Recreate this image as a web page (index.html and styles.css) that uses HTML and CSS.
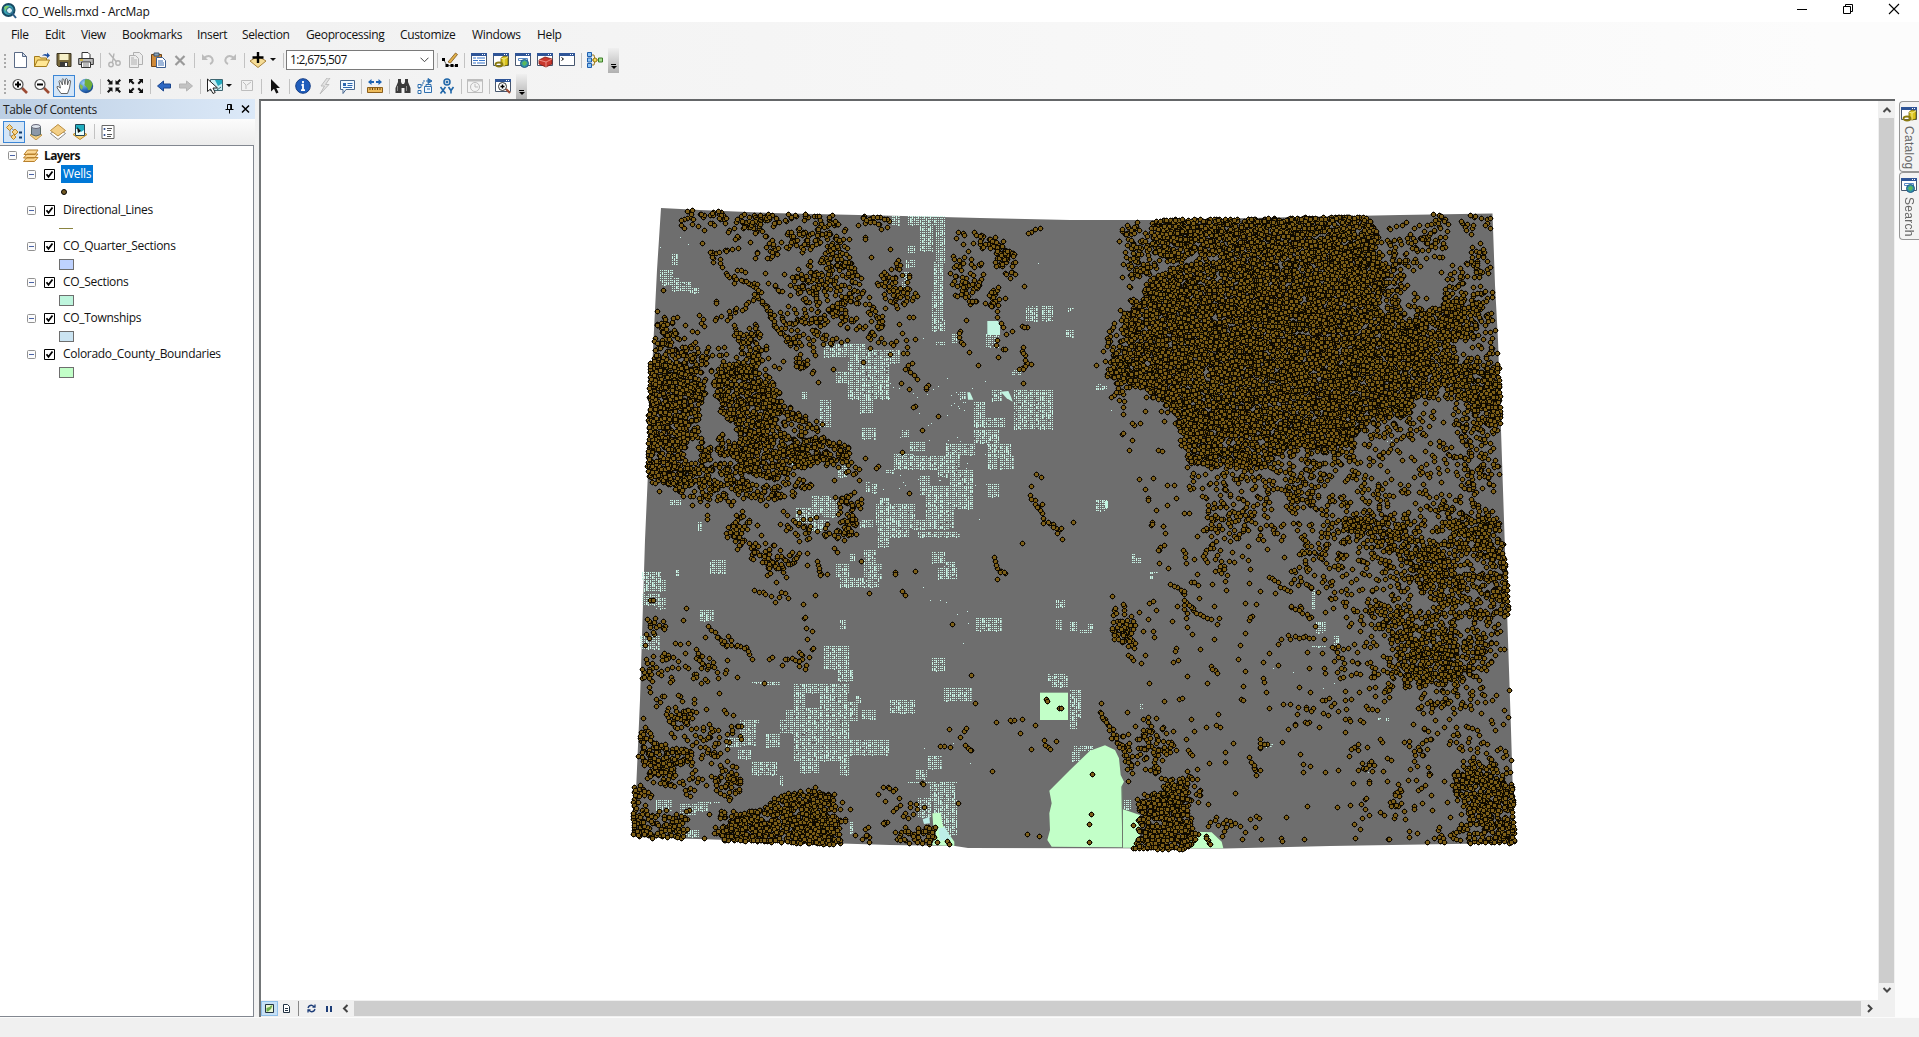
FILE: index.html
```html
<!DOCTYPE html>
<html lang="en">
<head>
<meta charset="utf-8">
<title>CO_Wells.mxd - ArcMap</title>
<link rel="stylesheet" href="styles.css">
</head>
<body>
<svg class="defs" width="0" height="0">
  <defs>
    <radialGradient id="globe" cx=".35" cy=".3" r=".8"><stop offset="0" stop-color="#9fd0f5"/><stop offset=".6" stop-color="#2c6fc0"/><stop offset="1" stop-color="#123a78"/></radialGradient>
    <symbol id="win" viewBox="0 0 16 16"><path d="M.5 1.500h15v12H.5z" fill="#fff" stroke="#46566e"/><path d="M0 1h16v3H0z" fill="#2f5597"/><path d="M11 2h1v1h-1zM13 2h1v1h-1z" fill="#fff"/></symbol>
    <symbol id="catalog" viewBox="0 0 16 16"><use href="#win"/><path d="M8 6l3-2 4 1v8l-4 1-3-1z" fill="#d8c21c" stroke="#6b5c00" stroke-width=".8"/><path d="M11 7v7M8 6l3 1 4-2" stroke="#fff3a0" fill="none" stroke-width=".8"/><ellipse cx="6" cy="12.500" rx="3.500" ry="2" fill="none" stroke="#8b7b10" stroke-width="1.800"/></symbol>
    <symbol id="search" viewBox="0 0 16 16"><use href="#win"/><path d="M3.500 6.500h9v2h-9z" fill="#fff" stroke="#5a8ac6"/><circle cx="9.500" cy="11.500" r="4" fill="#2f93a8" stroke="#235a86"/><path d="M7 11q3-4 5 0q-2 4-4 2z" fill="#5cb85c"/></symbol>
    <symbol id="check" viewBox="0 0 11 11"><path d="M.5.5h10v10H.5z" fill="#fff" stroke="#000"/><path d="M2.500 5.200l2 2.500 4-5.200" fill="none" stroke="#000" stroke-width="1.800"/></symbol>
    <symbol id="minus" viewBox="0 0 9 9"><rect x=".5" y=".5" width="8" height="8" rx="1" fill="#fbfbfb" stroke="#919191"/><path d="M2 4.500h5" stroke="#4a63a7"/></symbol>
  </defs>
</svg>

<header class="titlebar">
  <svg class="app-icon" viewBox="0 0 16 16"><circle cx="7.500" cy="7" r="6" fill="#38a3b5" stroke="#174a63" stroke-width="2"/><path d="M3 4q4-3 6 1q-3 1-2 4q-3 0-4-5z" fill="#7fcf6e"/><circle cx="8.500" cy="7.500" r="3" fill="#d4f0f5" stroke="#1b5c80"/><path d="M11 10l4 5" stroke="#2a5c86" stroke-width="2"/></svg>
  <h1>CO_Wells.mxd - ArcMap</h1>
  <div class="window-buttons">
    <svg viewBox="0 0 12 12"><path d="M1 6.500h10" stroke="#000"/></svg>
    <svg viewBox="0 0 12 12"><path d="M1.500 3.500h7v7h-7zM3.500 3V1.500h7v7H9" fill="none" stroke="#000"/></svg>
    <svg viewBox="0 0 12 12"><path d="M1 1l10 10M11 1L1 11" stroke="#000" stroke-width="1.100"/></svg>
  </div>
</header>

<nav class="menubar">
  <span>File</span><span>Edit</span><span>View</span><span>Bookmarks</span><span>Insert</span><span>Selection</span><span>Geoprocessing</span><span>Customize</span><span>Windows</span><span>Help</span>
</nav>

<div class="toolbar standard">
  <i class="grip"></i>
  <b><svg viewBox="0 0 16 16"><path d="M2.500.500h8l4 4v11h-12z" fill="#fff" stroke="#5b6b86"/><path d="M10.500.5v4h4z" fill="#cdd9ea" stroke="#5b6b86"/></svg></b>
  <b><svg viewBox="0 0 16 16"><path d="M.5 14.500v-10h5l1 1.500h6v2" fill="#f7d774" stroke="#a37b1c"/><path d="M.5 14.500l3-6.500h12l-3 6.500z" fill="#ffe794" stroke="#a37b1c"/><path d="M8 4q2-3 5-1.500V.5l3 3-3 2.800V4.500Q10 3 8 4z" fill="#1d4fa0"/></svg></b>
  <b><svg viewBox="0 0 16 16"><path d="M1 1.500h14v13H2.500L1 13z" fill="#77683a" stroke="#3a3320"/><path d="M3.500 2h9v6h-9z" fill="#f6f0c8"/><path d="M4 10h8v5H4z" fill="#3a3a3a"/><path d="M9 11h2v3H9z" fill="#fff"/></svg></b>
  <b><svg viewBox="0 0 16 16"><path d="M4 6V.500h6l2 2V6" fill="#fff" stroke="#333"/><path d="M.7 6.500h14.600v6H.7z" fill="#b9b9b9" stroke="#333"/><path d="M3.500 10h9v5.500h-9z" fill="#fff" stroke="#333"/><path d="M5 12h6M5 14h6" stroke="#777"/><path d="M2 8h3" stroke="#d5b52c" stroke-width="1.500"/></svg></b>
  <i class="sep"></i>
  <b><svg viewBox="0 0 16 16" fill="none" stroke="#b4b4b4" stroke-width="1.400"><path d="M3 1l7.500 9M8 1.500L6.500 10"/><circle cx="5" cy="12.500" r="2.200"/><circle cx="12" cy="11" r="2.200"/></svg></b>
  <b><svg viewBox="0 0 16 16" fill="#ededed" stroke="#b0b0b0"><path d="M5.500.500h6l3 3v9h-9z"/><path d="M1.500 3.500h6l3 3v9h-9z"/><path d="M3 8h6M3 10h6M3 12h6M3 6h3"/></svg></b>
  <b><svg viewBox="0 0 16 16"><path d="M1.500 2.500h10v12h-10z" fill="#cf8a3a" stroke="#6f4417"/><path d="M4 1h5v3H4z" fill="#8ba5bd" stroke="#3f5266"/><path d="M6.500 5.500h6l3 3v7h-9z" fill="#fff" stroke="#3d5e90"/><path d="M8 9h5M8 11h6M8 13h6" stroke="#3d6fb4"/></svg></b>
  <b><svg viewBox="0 0 16 16"><path d="M3.500 4l9 9M12.500 4l-9 9" stroke="#9a9a9a" stroke-width="2.200"/></svg></b>
  <i class="sep"></i>
  <b><svg viewBox="0 0 16 16" fill="none" stroke="#bcbcbc" stroke-width="2"><path d="M4 6q5-4 8 0q2 4-2 6"/><path d="M2 2v6h6z" fill="#bcbcbc" stroke="none"/></svg></b>
  <b><svg viewBox="0 0 16 16" fill="none" stroke="#bcbcbc" stroke-width="2"><path d="M12 6q-5-4-8 0q-2 4 2 6"/><path d="M14 2v6H8z" fill="#bcbcbc" stroke="none"/></svg></b>
  <i class="sep"></i>
  <b><svg viewBox="0 0 16 16"><path d="M0 9l8-5 8 5-8 6.500z" fill="#f5dc96" stroke="#a8823a"/><path d="M8 0v11M2.500 5.500h11" stroke="#000" stroke-width="2.400"/></svg></b>
  <i class="caret"></i>
  <i class="sep"></i>
  <div class="scale"><span>1:2,675,507</span><svg viewBox="0 0 9 6"><path d="M.5.7l4 4 4-4" fill="none" stroke="#444"/></svg></div>
  <i class="sep thin"></i>
  <b><svg viewBox="0 0 16 16"><path d="M6 10L13.500 1l2 1.500L8.500 11z" fill="#e0b04a" stroke="#7c541b" stroke-width=".8"/><path d="M1.500 7.500l3.500 6 9.500.5" fill="none" stroke="#333" stroke-width=".8"/><path d="M0 6h3v3H0zM3.500 12h3v3h-3zM8.500 12h3v3h-3zM13 12h3v3h-3z" fill="#000"/></svg></b>
  <i class="sep wide"></i>
  <b><svg viewBox="0 0 16 16"><use href="#win"/><path d="M2 6h3M6 6h8M2 8.500h5M8 8.500h6M2 11h3M6 11h8" stroke="#3673c7"/></svg></b>
  <b><svg viewBox="0 0 16 16"><use href="#catalog"/></svg></b>
  <b><svg viewBox="0 0 16 16"><use href="#search"/></svg></b>
  <b><svg viewBox="0 0 16 16"><use href="#win"/><path d="M2 8l6-3 7 2v5l-6 3-7-3z" fill="#c9382d" stroke="#7c1812" stroke-width=".8"/><path d="M2 8l7 2 6-3M9 10v5" stroke="#f4a39b" fill="none" stroke-width=".8"/></svg></b>
  <b><svg viewBox="0 0 16 16"><use href="#win"/><path d="M2.500 5.500l2 1.500-2 1.500" fill="none" stroke="#000"/></svg></b>
  <i class="sep"></i>
  <b><svg viewBox="0 0 16 16"><path d="M5 3h2l1 5H5M5 13h2l1-5h4" fill="none" stroke="#9a7a20"/><path d="M.5.500h4v4h-4zM.5 6h4v4h-4zM.5 11.500h4v4h-4z" fill="#8ec5f5" stroke="#1f5fae"/><circle cx="8" cy="8" r="2" fill="#f6dc5a" stroke="#957514"/><path d="M11.500 6h4v4h-4z" fill="#a7dd8e" stroke="#3c7d26"/></svg></b>
  <i class="overflow"></i>
</div>

<div class="toolbar tools">
  <i class="grip"></i>
  <b><svg viewBox="0 0 16 16"><path d="M10 10l5 5" stroke="#9c4a33" stroke-width="2.600"/><circle cx="6" cy="6.500" r="5" fill="#fff" stroke="#555" stroke-width="1.200"/><path d="M6 3.500v6M3 6.500h6" stroke="#000" stroke-width="2"/></svg></b>
  <b><svg viewBox="0 0 16 16"><path d="M10 10l5 5" stroke="#9c4a33" stroke-width="2.600"/><circle cx="6" cy="6.500" r="5" fill="#fff" stroke="#555" stroke-width="1.200"/><path d="M3 6.500h6" stroke="#000" stroke-width="2"/></svg></b>
  <b class="active"><svg viewBox="0 0 16 16"><path d="M5 15.500L1.200 10q-.8-2 1-1.500L4.500 10 3 3.500q.2-1.500 1.600-.4L6.500 7 6 1.500q.8-1.500 1.800 0L9 6.500 9.500 1q1-1.200 1.800.2L11.500 7l1.500-4.500q1.300-.8 1.600.6L13.500 10l-2 5.500z" fill="#fff" stroke="#555" stroke-width=".9"/></svg></b>
  <b><svg viewBox="0 0 16 16"><circle cx="8" cy="8" r="7.200" fill="url(#globe)"/><path d="M7 1.500q6-1 7.500 5l-2 5q-3 2-3-1.500L6.500 7z" fill="#6fae3a"/><path d="M2 6l3 2-1 4q-3-2-2-6z" fill="#86bd4c"/></svg></b>
  <i class="sep"></i>
  <b><svg viewBox="0 0 16 16" fill="#111"><path d="M2 6.500h4.500V2L5 3.500 2.500 1 1 2.500 3.500 5zM9.500 6.500H14L12.500 5 15 2.500 13.500 1 11 3.500 9.500 2zM2 9.500h4.500V14L5 12.500 2.500 15 1 13.500 3.500 11zM9.500 9.500H14L12.500 11 15 13.500 13.500 15 11 12.500 9.500 14z"/></svg></b>
  <b><svg viewBox="0 0 16 16" fill="#111"><path d="M1 1h4.500L4 2.500 6.500 5 5 6.500 2.500 4 1 5.500zM10.500 1H15v4.500L13.500 4 11 6.500 9.500 5 12 2.500zM1 15h4.500L4 13.500 6.500 11 5 9.500 2.500 12 1 10.500zM10.500 15H15v-4.500L13.500 12 11 9.500 9.500 11l2.500 2.500z"/></svg></b>
  <i class="sep"></i>
  <b><svg viewBox="0 0 16 16"><path d="M1.500 8l6-5V6h7v4h-7v3z" fill="#2d68c4" stroke="#1a458d"/></svg></b>
  <b><svg viewBox="0 0 16 16"><path d="M14.500 8l-6-5V6h-7v4h7v3z" fill="#c2c2c2" stroke="#b4b4b4"/></svg></b>
  <i class="sep wide"></i>
  <b><svg viewBox="0 0 16 16"><path d="M3.500 1.500h12v11h-12z" fill="#c9eef2" stroke="#3e6570"/><path d="M8 2h7v3.500L11 8z" fill="#22a9bd"/><path d="M10 12l4-3" stroke="#3e6570"/><path d="M.5 1v12.500l3-2.500 2.500 4.500 2.200-1L6 10h4.500z" fill="#fff" stroke="#222"/></svg></b>
  <i class="caret"></i>
  <b><svg viewBox="0 0 16 16" fill="#f2f2f2" stroke="#bdbdbd"><path d="M2.500 2.500h11v10h-11z"/><path d="M4 4l3 3v4M8 7l4-3"/></svg></b>
  <i class="sep"></i>
  <b><svg viewBox="0 0 16 16"><path d="M4 1v12.500l3-2.700 2.200 4.700 2.300-1L9.300 10H13z" fill="#111"/></svg></b>
  <i class="sep"></i>
  <b><svg viewBox="0 0 16 16"><circle cx="8" cy="8" r="7.300" fill="#1f5dbc" stroke="#163f86"/><path d="M8 3v2.200M6.500 7H8v5M6 12.200h4" stroke="#fff" stroke-width="1.800" fill="none"/></svg></b>
  <b><svg viewBox="0 0 16 16"><path d="M10 0L4 8h3.500L3 16l9-9.500H8.500L13 0z" fill="#e4e4e4" stroke="#bcbcbc"/></svg></b>
  <b><svg viewBox="0 0 16 16"><path d="M1.500 2.500h14v9H7l-3 4v-4H1.500z" fill="#f1f8ff" stroke="#48678e"/><path d="M4 5h3v3H4z" fill="#2d67b1"/><path d="M8.500 5.500h5M8.500 7.500h5M4 9.500h9" stroke="#2d67b1"/></svg></b>
  <i class="sep"></i>
  <b><svg viewBox="0 0 16 16"><path d="M1 4l3.500-3v2H7v2H4.500v2zM15 4l-3.500-3v2H9v2h2.500v2z" fill="#1e64b4"/><path d="M.5 9.500h15v5H.5z" fill="#eebc5c" stroke="#8c5f1c"/><path d="M3 10v2M5.500 10v2M8 10v2M10.500 10v2M13 10v2" stroke="#6b4510"/></svg></b>
  <i class="sep"></i>
  <b><svg viewBox="0 0 16 16"><path d="M3 1h3v3l1 2h2l1-2V1h3v3l2.500 6v5H9.500v-5h-3v5H.5v-5L3 4z" fill="#3b3b3b"/><path d="M2.500 8v5M11.500 8v5" stroke="#8c8c8c"/></svg></b>
  <b><svg viewBox="0 0 16 16" fill="none" stroke="#2f6fae"><path d="M2 14V7h4V3h6" stroke-dasharray="2 1"/><path d="M7.500 8.500h7v6h-7z" fill="#eef6ff"/><path d="M9 8V6.500h5V8M10 11h3"/><path d="M11 .5l4 2.500-4 2.500z" fill="#2f6fae"/><path d="M1 6.500h3v3H1zM1 12.500h3v3H1z" fill="#fff"/></svg></b>
  <b><svg viewBox="0 0 16 16" fill="none" stroke="#1f66a8"><circle cx="8" cy="4" r="3" stroke-width="1.500"/><circle cx="8" cy="4" r="1" fill="#1f66a8"/><path d="M1.500 9l5 6.500M6.500 9l-5 6.500M9.500 9l2.500 3.500L14.500 9M12 12.500v3" stroke-width="1.600"/></svg></b>
  <i class="sep"></i>
  <b><svg viewBox="0 0 16 16" fill="#f4f4f4" stroke="#bdbdbd"><path d="M.5 1.500h15v13H.5z"/><path d="M0 2.500h16" stroke-width="2"/><circle cx="8" cy="9" r="4.500"/><path d="M8 6v3h3" fill="none"/></svg></b>
  <i class="sep"></i>
  <b><svg viewBox="0 0 16 16"><use href="#win"/><path d="M11 11l4 4" stroke="#9c4a33" stroke-width="2.200"/><circle cx="7.500" cy="8.500" r="4" fill="#fff" stroke="#333"/><path d="M7.500 6.500v4M5.500 8.500h4" stroke="#000" stroke-width="1.400"/></svg></b>
  <i class="overflow"></i>
</div>

<main class="workspace">
  <aside class="toc">
    <div class="toc-head"><h2>Table Of Contents</h2>
      <svg viewBox="0 0 9 10"><path d="M2.500 5.500v-5h4v5M5.700.5v5M.5 5.500h8M4.500 6v3.500" fill="none" stroke="#000"/></svg>
      <svg viewBox="0 0 9 10"><path d="M1 1.500l7 7M8 1.500l-7 7" stroke="#000" stroke-width="1.500"/></svg>
    </div>
    <div class="toc-tools">
      <b class="active"><svg viewBox="0 0 16 16"><path d="M4 5v7h4M5 4l5 4" stroke="#888" fill="none"/><path d="M.5 3.500l3-3 3 3-3 3zM6 8l3-3 3 3-3 3zM5 13l2.500-2.500L10 13l-2.500 2.500z" fill="#f8d488" stroke="#b88428"/><path d="M13 8.500h3M13 13.500h3" stroke="#123a6a" stroke-width="2"/></svg></b>
      <b><svg viewBox="0 0 16 16"><path d="M2 11l6-3 6 3-6 5z" fill="#f2cf83" stroke="#c0954a"/><path d="M3.500 2.500v8q4.500 3 9 0v-8z" fill="#8b98a8" stroke="#566"/><ellipse cx="8" cy="2.500" rx="4.500" ry="2" fill="#dfe6ee" stroke="#667"/></svg></b>
      <b><svg viewBox="0 0 16 16"><path d="M.5 9.500l7.500 6 7.500-6-7.500-5z" fill="#fff" stroke="#888"/><path d="M.5 6.500L8 .5l7.500 6L8 12z" fill="#f3cf86" stroke="#b98d3f"/></svg></b>
      <b><svg viewBox="0 0 16 16"><path d="M1 10.500l7-4 7 4-7 5z" fill="#f6d27d" stroke="#c08c2c"/><path d="M3.500.500h9v11h-9z" fill="#eaffff" stroke="#245"/><path d="M4 1h8v5L9 8 7 5H4z" fill="#21aebf"/><path d="M5 3l1 6 3-2z" fill="#111"/></svg></b>
      <i class="sep"></i>
      <b><svg viewBox="0 0 16 16"><path d="M2 1.500h12v13H2z" fill="#fff" stroke="#666"/><path d="M7 4.500h5M7 6.500h4M7 10.500h5M7 12.500h4" stroke="#555"/><circle cx="4.500" cy="5" r="1" fill="#248"/><circle cx="4.500" cy="11" r="1" fill="#248"/></svg></b>
    </div>
    <div class="tree">
      <div class="root"><svg class="minus"><use href="#minus"/></svg><svg class="stack" viewBox="0 0 16 13"><path d="M.5 12.500L4 8.500h11l-3.500 4zM.5 9L4 5h11l-3.500 4zM1 5.500L4.500 1H15l-3 4.500z" fill="#fbd692" stroke="#b9812c"/></svg><strong>Layers</strong></div>
      <div class="layer selected"><svg class="minus"><use href="#minus"/></svg><svg class="check"><use href="#check"/></svg><span>Wells</span></div>
      <div class="symbol"><i class="dot"></i></div>
      <div class="layer"><svg class="minus"><use href="#minus"/></svg><svg class="check"><use href="#check"/></svg><span>Directional_Lines</span></div>
      <div class="symbol"><i class="line"></i></div>
      <div class="layer"><svg class="minus"><use href="#minus"/></svg><svg class="check"><use href="#check"/></svg><span>CO_Quarter_Sections</span></div>
      <div class="symbol"><i class="swatch quarter"></i></div>
      <div class="layer"><svg class="minus"><use href="#minus"/></svg><svg class="check"><use href="#check"/></svg><span>CO_Sections</span></div>
      <div class="symbol"><i class="swatch section"></i></div>
      <div class="layer"><svg class="minus"><use href="#minus"/></svg><svg class="check"><use href="#check"/></svg><span>CO_Townships</span></div>
      <div class="symbol"><i class="swatch township"></i></div>
      <div class="layer"><svg class="minus"><use href="#minus"/></svg><svg class="check"><use href="#check"/></svg><span>Colorado_County_Boundaries</span></div>
      <div class="symbol"><i class="swatch county"></i></div>
    </div>
  </aside>

  <section class="view">
    <canvas id="map" width="1617" height="899"></canvas>
    <div class="vscroll">
      <svg viewBox="0 0 10 8"><path d="M1.500 6L5 2.500 8.500 6" fill="none" stroke="#4a4a4a" stroke-width="2"/></svg>
      <i></i>
      <svg viewBox="0 0 10 8"><path d="M1.500 2L5 5.500 8.500 2" fill="none" stroke="#4a4a4a" stroke-width="2"/></svg>
    </div>
    <div class="viewbar">
      <b class="active"><svg viewBox="0 0 9 9"><path d="M.5.500h8v8h-8z" fill="#eaf7d2" stroke="#234"/><path d="M1.500 7.500V4l3-1 1.500-1.500h1.500L6 5 3 7.500z" fill="#6fae4c"/></svg></b>
      <b><svg viewBox="0 0 9 9"><path d="M1.500.500h4l2 2v6h-6z" fill="#fff" stroke="#234"/><path d="M3 4.500h3M3 6.500h3" stroke="#234"/></svg></b>
      <i class="sep"></i>
      <b><svg viewBox="0 0 9 9" fill="none" stroke="#1d3d78" stroke-width="1.300"><path d="M1 4q1-3 4-2.700L8 3M8 5q-1 3-4 2.700L1 6M8 .5V3H5.500M1 8.500V6h2.500"/></svg></b>
      <b><svg viewBox="0 0 9 9"><path d="M2 2h2v6H2zM6 2h2v6H6z" fill="#1d3d78"/></svg></b>
      <b><svg viewBox="0 0 9 9"><path d="M6.500 1L3 4.500 6.500 8" fill="none" stroke="#444" stroke-width="2"/></svg></b>
      <i class="thumb"></i>
      <b class="end"><svg viewBox="0 0 9 9"><path d="M3 1l3.500 3.500L3 8" fill="none" stroke="#444" stroke-width="2"/></svg></b>
    </div>
  </section>

  <aside class="dock">
    <div class="tab catalog"><svg viewBox="0 0 16 16"><use href="#catalog"/></svg><span>Catalog</span></div>
    <div class="tab search"><svg viewBox="0 0 16 16"><use href="#search"/></svg><span>Search</span></div>
  </aside>
</main>
<footer class="statusbar"></footer>
<script src="map.js"></script>
</body>
</html>
```
FILE: styles.css
```css
* { box-sizing: border-box; }
body {
  margin: 0;
  width: 1919px;
  height: 1037px;
  overflow: hidden;
  display: flex;
  flex-direction: column;
  font: 12px "Open Sans", "Noto Sans", sans-serif;
  color: #111;
  background: linear-gradient(90deg, #f0f0f0, #fcfcfc 95%);
}
.defs { position: absolute; }
svg { display: block; flex: none; }

.titlebar { height: 22px; display: flex; align-items: center; background: #fff; padding-left: 1px; flex: none; }
.app-icon { width: 16px; height: 16px; }
.titlebar h1 { margin: 0 0 0 5px; font-size: 12px; font-weight: 400; letter-spacing: -.25px; }
.window-buttons { margin-left: auto; display: flex; gap: 34px; padding-right: 19px; margin-top: -4px; }
.window-buttons svg { width: 12px; height: 12px; }

.menubar {
  height: 25px;
  flex: none;
  display: grid;
  grid-template-columns: 34px 36px 41px 75px 45px 64px 94px 72px 65px 60px;
  padding-left: 11px;
  align-items: center;
  letter-spacing: -.35px;
}

.toolbar { height: 26px; display: flex; align-items: center; flex: none; }
.toolbar b, .toc-tools b {
  width: 22px; height: 22px; flex: none;
  display: flex; align-items: center; justify-content: center;
}
.toolbar svg, .toc-tools svg { width: 16px; height: 16px; }
b.active { background: #d3e5f7; border: 1px solid #3c86d6; }
.grip { width: 9px; height: 15px; background: radial-gradient(circle at 5px 2px, #a9a9a9 1px, transparent 1.100px) 0 0 / 9px 4px; }
.sep { width: 6px; height: 15px; flex: none; background: linear-gradient(#c2c2c2, #c2c2c2) 3px 0 / 1px 100% no-repeat; }
.sep.thin { width: 5px; }
.sep.wide { width: 7px; }
.caret { width: 11px; height: 4px; background: #111; clip-path: polygon(1px 0, 7px 0, 4px 3px); flex: none; }
.toolbar.tools .caret { width: 10px; clip-path: polygon(0 0, 6px 0, 3px 3px); }
.overflow {
  width: 11px; height: 25px; margin-left: 2px; flex: none;
  background:
    linear-gradient(#000, #000) 3px 16px / 5px 1px no-repeat,
    linear-gradient(#f0f0f0, #b0b0b0);
  position: relative;
}
.overflow::after {
  content: "";
  position: absolute; left: 3px; top: 18px;
  border: 3px solid transparent; border-top-color: #000; border-bottom: 0;
}
.toolbar .scale {
  width: 148px; height: 20px; flex: none;
  border: 1px solid #7a7a7a; background: #fff;
  display: flex; align-items: center; justify-content: space-between;
  padding: 0 4px 2px 3px;
  letter-spacing: -.7px;
}
.toolbar .scale svg { width: 9px; height: 6px; margin-top: 2px; }

.workspace { display: flex; height: 918px; flex: none; }
.toc { width: 255px; display: flex; flex-direction: column; }
.toc-head {
  height: 20px; display: flex; align-items: center; gap: 7px; padding: 0 5px 0 3px;
  background: linear-gradient(90deg, #bccfe4, #dce9f8);
}
.toc-head h2 { margin: 0 auto 0 0; font-size: 12px; font-weight: 400; letter-spacing: -.4px; color: #222; }
.toc-head svg { width: 9px; height: 10px; }
.toc-tools { height: 26px; display: flex; align-items: center; padding: 0 0 1px 3px; background: linear-gradient(#fcfcfc, #ececec); }
.tree { flex: 1; width: 254px; background: #fff; border: 1px solid #828790; border-left: 0; }
.root, .layer, .symbol { height: 18px; display: flex; align-items: center; }
.root { padding-left: 8px; margin-bottom: 1px; }
.minus { width: 9px; height: 9px; }
.stack { width: 16px; height: 13px; margin: 0 5px 0 6px; }
.root strong { font-size: 12px; letter-spacing: -.6px; }
.layer { padding-left: 27px; letter-spacing: -.3px; }
.check { width: 11px; height: 11px; margin: 0 6px 0 8px; }
.layer span { padding: 0 2px; line-height: 18px; }
.layer.selected span { background: #0078d7; color: #fff; }
.symbol { padding-left: 59px; }
.dot { width: 6px; height: 6px; margin: 0 0 0 2px; border-radius: 50%; background: #735a24; border: 1px solid #000; }
.line { width: 14px; height: 1px; background: #8a8440; }
.swatch { width: 15px; height: 11px; border: 1px solid #6e6e6e; }
.quarter { background: #bed2ff; }
.section { background: #bef5dd; }
.township { background: #cbe4f2; }
.county { background: #c2ffc8; }

.view {
  margin-left: 4px; width: 1636px; height: 918px;
  display: grid; grid-template: 900px 16px / 1618px 16px;
  border-top: 2px solid #646668; border-left: 2px solid #737678;
  background: #f0f0f0;
}
#map { display: block; width: 1617px; height: 899px; background: #fff; }
.vscroll { display: flex; flex-direction: column; align-items: center; justify-content: space-between; width: 15px; height: 898px; padding: 5px 0; }
.vscroll svg { width: 10px; height: 8px; }
.vscroll i { width: 15px; height: 865px; background: #cdcdcd; }
.viewbar { grid-column: 1 / 3; display: flex; align-items: center; height: 15px; }
.viewbar b { width: 17px; height: 15px; display: flex; align-items: center; justify-content: center; }
.viewbar svg { width: 9px; height: 9px; }
.viewbar b.active { border-color: #90c0ea; background: #c7e0f5; }
.viewbar .sep { width: 8px; background-image: linear-gradient(#888, #888); }
.viewbar .thumb { width: 1507px; height: 15px; background: #cdcdcd; }

.dock { margin-left: 4px; width: 20px; padding-top: 2px; }
.tab {
  border: 1px solid #969696; border-right: 0; border-radius: 4px 0 0 4px;
  background: #f3f3f3; display: flex; flex-direction: column; align-items: flex-start; gap: 4px;
  padding: 4px 0 0 1px; color: #666;
}
.tab svg { width: 16px; height: 16px; }
.tab span { writing-mode: vertical-rl; font: 12px/16px "Liberation Sans", sans-serif; letter-spacing: .3px; }
.tab.catalog { height: 71px; }
.tab.search { height: 68px; }
.statusbar { flex: 1; background: #f0f0f0; border-top: 1px solid #fbfbfb; }
```
FILE: map.js
```js
const canvas = document.getElementById('map');
const ctx = canvas.getContext('2d');
ctx.translate(-261, -101);

let seed = 20177;
const rnd = () => {
  seed = (seed * 1664525 + 1013904223) >>> 0;
  return seed / 4294967296;
};

// Map sheets: each quadrant uses its own origin, three units to a pixel.
const origins = { A: [630, 200], B: [1070, 200], C: [620, 520], D: [1070, 520] };
const toPoints = (sheet, text) => text.trim().split(/\s+/).map(pair => {
  const [x, y] = pair.split(',').map(Number);
  return [origins[sheet][0] + x / 3, origins[sheet][1] + y / 3];
});

const fillPoly = (points, color) => {
  ctx.fillStyle = color;
  ctx.beginPath();
  points.forEach(([x, y], i) => (i ? ctx.lineTo(x, y) : ctx.moveTo(x, y)));
  ctx.closePath();
  ctx.fill();
};

const inside = (x, y, poly) => {
  let hit = false;
  for (let i = 0, j = poly.length - 1; i < poly.length; j = i++) {
    const [xi, yi] = poly[i], [xj, yj] = poly[j];
    if ((yi > y) !== (yj > y) && x < (xj - xi) * (y - yi) / (yj - yi) + xi) hit = !hit;
  }
  return hit;
};

const state = [[661, 208], [700, 210], [770, 213], [903, 216], [980, 218], [1070, 220], [1158, 220], [1300, 217], [1400, 215],
  [1492.500, 213.500], [1495, 285], [1498, 340], [1501, 430], [1504, 520], [1508, 640], [1511, 730], [1514, 830], [1515, 843],
  [1330, 846], [1225, 848.500], [968, 848], [955, 846], [890, 845], [760, 841], [634, 837], [640, 700], [645, 540], [649, 450],
  [653, 350], [657, 270]];
fillPoly(state, '#6e6e6e');

// Section grids: x, y, width, height
const grids = {
  A: `835,52,110,25 872,52,40,108 918,80,26,110 912,190,30,90 908,280,36,85 908,365,40,35 835,140,20,20 830,180,25,20 820,220,20,45 790,50,20,25
    90,215,40,35 130,250,60,28 185,265,28,16 130,165,18,35 100,235,50,20 1188,323,36,43 1238,323,32,43 1072,405,38,40 970,405,16,30
    585,435,125,40 660,450,145,40 655,490,125,110 618,520,40,35 695,600,42,40 575,600,36,80 518,578,14,20 697,687,40,35
    795,765,60,45 855,772,100,38 845,728,45,30 948,733,85,35 955,768,35,60 875,830,30,60 960,815,70,120 890,860,80,125 925,810,25,20
    755,895,30,30 740,915,115,72 1035,610,35,75 1072,655,55,30 1035,690,75,38 1155,575,120,118 1090,570,30,35 1075,735,70,40 1075,775,30,35 1115,770,38,40
    1075,855,36,37 710,850,12,30 728,852,18,28 500,925,60,40 550,890,60,60 585,905,40,50 540,960,60,30 120,903,32,18 1150,510,25,18
    993,577,18,22 1315,325,12,10 1313,390,8,22 695,965,40,20 625,800,25,35 475,785,18,16 820,690,22,20 770,810,20,12 920,430,28,10`,
  B: '0,325,10,10 0,390,12,24 78,903,36,36 78,560,36,10 86,552,18,10',
  C: `775,0,60,50 830,0,40,50 880,0,110,30 895,38,122,17 775,55,35,28 730,5,35,20 690,105,18,22 650,132,38,40 732,93,36,85 760,135,28,45
    665,178,115,30 940,100,42,33 958,145,58,33 975,128,35,18 275,120,44,42 245,270,40,32 70,158,55,20 75,180,62,35 70,225,50,35 62,350,55,38 110,235,30,32
    1068,297,78,38 612,378,74,72 655,455,46,34 397,488,25,6 440,490,42,9 525,495,163,30 525,525,35,85 605,525,83,85 555,565,50,45
    525,610,163,115 500,570,30,30 480,600,50,40 540,725,55,40 660,728,26,40 688,550,30,55 710,530,18,20 728,575,38,30 362,605,55,10 362,615,45,65
    320,655,45,25 440,645,38,38 358,692,38,30 397,727,78,37 688,660,124,45 938,417,40,38 975,505,84,37 813,540,78,38 927,708,40,38
    890,750,35,28 865,790,145,6 935,790,75,60 945,845,70,105 898,835,40,60 185,855,45,32 232,848,35,30 265,848,35,5 110,845,45,35 1285,465,58,20
    1298,485,45,20 1310,240,30,22 480,768,8,30 665,300,14,30 1310,305,18,26 200,935,40,20 690,910,8,35 545,0,60,12 580,5,30,35 235,10,8,28 170,155,10,15`,
  D: '0,515,34,80 0,597,24,35 15,680,60,18 10,698,20,30 5,310,24,30 30,335,35,10 55,315,18,18 730,210,10,55 740,310,28,35 795,350,16,30 730,378,40,4 160,845,25,25 585,672,25,8 190,105,10,25 198,115,18,15 240,160,22,6 245,170,12,8 762,183,6,12 215,555,10,16 950,597,10,8 925,598,8,6',
};
const painted = new Set();
for (const [sheet, text] of Object.entries(grids)) {
  for (const rect of text.trim().split(/\s+/)) {
    const [x, y, w, h] = rect.split(',').map(Number);
    const left = Math.floor((origins[sheet][0] + x / 3) / 2) * 2, top = Math.floor((origins[sheet][1] + y / 3) / 2) * 2;
    for (let py = top; py < top + h / 3; py += 2) {
      for (let px = left; px < left + w / 3; px += 2) {
        const key = px + ':' + py;
        if (painted.has(key)) continue;
        painted.add(key);
        if (rnd() < .04) continue;
        ctx.fillStyle = '#caf5e6';
        ctx.fillRect(px, py, px % 6 === 4 ? 1.600 : 1, rnd() < .2 ? 2 : 1);
      }
    }
  }
}
// Isolated slivers between townships
for (let i = 0; i < 70; i++) {
  ctx.fillStyle = '#c8eee6';
  ctx.fillRect(Math.round(880 + rnd() * 110), Math.round(380 + rnd() * 110), 1, 1);
}
[['A', 150, 110], ['A', 175, 132], ['A', 90, 140], ['A', 1225, 188], ['A', 880, 415], ['A', 950, 535], ['A', 1047, 957], ['A', 810, 710],
  ['C', 910, 200], ['C', 930, 240], ['C', 960, 240], ['C', 978, 246], ['C', 1012, 282], ['C', 1040, 272], ['C', 1045, 310], ['C', 1028, 368],
  ['C', 1050, 730], ['C', 912, 685], ['C', 1000, 668], ['D', 610, 445], ['D', 670, 457], ['D', 793, 490], ['D', 760, 505], ['D', 895, 757],
  ['B', 952, 722], ['B', 964, 720], ['B', 124, 631]].forEach(([s, x, y]) => {
  ctx.fillRect(Math.round(origins[s][0] + x / 3), Math.round(origins[s][1] + y / 3), 1, 1);
});

// Solid county and section polygons
const mint = '#c2f5e2', green = '#c2ffc8';
fillPoly(toPoints('A', '1072,363 1104,363 1110,375 1110,405 1072,405'), mint);
fillPoly(toPoints('A', '1112,575 1135,573 1143,590 1148,605 1130,595'), mint);
fillPoly(toPoints('A', '1012,577 1020,577 1030,599 1014,599'), mint);
fillPoly(toPoints('B', '105,903 114,903 114,924 105,924'), mint);
fillPoly(toPoints('C', '1260,518 1344,518 1344,600 1260,600'), green);
fillPoly(toPoints('D', '105,676 135,690 147,715 152,765 162,785 154,800 157,982 -55,980 -68,960 -60,930 -62,880 -55,850 -62,812 0,750 60,692'), green);
fillPoly(toPoints('D', '159,868 210,885 210,983 159,983'), green);
fillPoly(toPoints('D', '340,985 380,935 425,937 455,965 460,985'), green);
fillPoly(toPoints('C', '937,880 962,878 968,915 1003,965 1003,978 935,975 950,945 940,920'), green);
fillPoly(toPoints('C', '955,925 975,922 995,958 960,962'), '#bdeee8');
fillPoly(toPoints('C', '908,898 928,890 930,910 912,912'), '#bdeee8');

// Wells
const well = (x, y) => {
  x = Math.round(x) - 2; y = Math.round(y) - 2;
  ctx.fillStyle = 'rgba(16, 10, 0, .4)';
  ctx.fillRect(x + 2, y - 1, 1, 7);
  ctx.fillRect(x - 1, y + 2, 7, 1);
  ctx.fillStyle = '#100a00';
  ctx.fillRect(x + 1, y, 3, 5);
  ctx.fillRect(x, y + 1, 5, 3);
  ctx.fillStyle = '#7d5f18';
  ctx.fillRect(x + 1, y + 1, 3, 3);
};

const gaps = [
  ['B', '325,195 370,152 395,160 365,190'], ['B', '400,165 450,160 448,178 420,182'], ['B', '432,205 450,212 455,238 436,242'],
  ['B', '650,352 690,348 684,372 655,360'], ['B', '670,318 705,288 715,300 680,322'], ['B', '512,112 535,115 530,128'],
  ['B', '650,390 735,405 735,415 700,408'], ['B', '855,380 875,385 870,395'], ['B', '300,130 325,135 320,150'], ['B', '545,95 555,95 552,115'],
  ['B', '1140,420 1195,445 1200,470 1150,440'], ['B', '1185,360 1215,355 1210,375'], ['B', '865,545 895,535 890,545'], ['B', '915,470 940,460 935,475'],
  ['A', '215,600 240,560 265,630 330,700 325,740 280,695 230,740 210,700'], ['A', '150,740 200,745 210,790 170,785'], ['A', '245,760 310,770 320,790 260,790'],
  ['A', '470,790 495,785 490,805 470,805'], ['A', '330,815 450,840 560,790 610,800 600,830 480,820 430,855 360,850'],
].map(([s, t]) => toPoints(s, t));

// sheet, wells per 10x10 px cell, outline
const fields = [
  ['A', 9, '170,45 185,28 250,25 300,38 300,62 250,68 180,66'],
  ['A', 5, '130,55 180,50 180,75 145,75'],
  ['A', 9, '300,40 500,38 500,60 420,75 385,90 350,100 325,75'],
  ['A', 3, '250,95 335,85 335,110 260,112'],
  ['A', 7, '505,45 610,42 640,80 655,105 600,135 540,75'],
  ['A', 8, '470,85 560,92 570,150 500,155 470,130'],
  ['A', 8, '685,45 770,50 775,90 740,75 690,65'],
  ['A', 3, '410,95 480,140 430,190 340,165 350,145 410,165'],
  ['A', 2, '235,145 320,140 270,205 240,190'],
  ['A', 3, '290,205 360,210 390,250 350,250 300,235'],
  ['A', 7.500, '580,140 640,120 690,220 690,320 610,320 520,300 480,240 510,190 570,190'],
  ['A', 3, '390,240 480,220 500,260 420,275'],
  ['A', 5.500, '730,205 820,180 845,240 790,320 740,260'],
  ['A', 6, '780,260 860,270 855,325 800,330'],
  ['A', 7, '590,325 640,330 700,380 690,398 610,365 560,390 500,355 530,330'],
  ['A', 3, '430,315 520,320 560,360 500,400 450,390'],
  ['A', 6, '465,395 560,395 660,415 640,430 560,425 580,470 540,445 475,445'],
  ['A', 3.500, '700,290 780,340 760,380 720,420 700,400 730,360'],
  ['A', 4.500, '415,480 540,468 555,505 440,505'],
  ['A', 2, '740,390 860,430 830,460 760,440'],
  ['A', 8, '78,370 130,340 140,400 180,430 240,450 240,490 200,520 60,490 70,420'],
  ['A', 2, '150,345 210,340 300,400 380,360 370,390 250,395 160,400'],
  ['A', 9, '315,395 390,390 400,470 340,465'],
  ['A', 5, '275,335 330,305 375,310 320,345 310,380 280,380'],
  ['A', 1.500, '200,440 430,400 420,520 220,520'],
  ['A', 14, '62,480 200,500 225,560 235,620 200,700 150,800 190,850 160,880 50,830 50,760 58,620'],
  ['A', 13, '250,500 380,480 440,570 440,690 500,720 560,710 670,740 640,790 560,790 430,840 340,830 350,740 260,620'],
  ['A', 9, '150,760 350,740 400,840 560,850 500,880 400,910 340,880 280,900 200,860 150,840'],
  ['A', 7, '200,690 290,700 350,740 330,790 220,790 190,760'],
  ['A', 5, '430,570 530,650 590,700 510,700 440,690'],
  ['A', 5, '550,840 680,830 690,790 630,790 620,850'],
  ['A', 4, '170,870 300,870 320,910 200,910 190,925'],
  ['A', 9, '615,890 690,890 670,990 625,985'],
  ['A', 6, '295,940 340,940 360,985 310,990'],
  ['A', 3, '440,940 530,920 560,990 450,990'],
  ['A', 10, '1035,100 1110,115 1160,170 1150,235 1100,210 1100,160 1050,135'],
  ['A', 7, '970,175 1015,160 1050,190 1010,210 970,205'],
  ['A', 8, '975,230 1050,220 1045,290 1020,320 985,290'],
  ['A', 7, '1060,260 1120,270 1110,325 1070,315'],
  ['A', 1.800, '975,355 1050,355 1010,420 1020,460 990,460 980,420'],
  ['A', 1, '1110,350 1130,360 1140,450 1100,440'],
  ['B', 15, '240,60 880,48 920,100 905,160 960,230 920,290 940,350 1030,350 1060,420 1080,500 1040,590 1020,640 900,655 850,700 770,740 650,740 600,800 480,800 390,795 340,780 320,650 270,590 200,555 150,560 110,510 130,470 190,440 150,380 170,340 210,280 240,240 320,200 240,150'],
  ['B', 10, '1030,350 1120,300 1180,300 1200,400 1140,430 1200,470 1285,500 1290,650 1180,600 1080,585 1040,590'],
  ['B', 7, '160,110 200,65 220,110 240,150 260,230 200,245 165,245 175,190 160,150'],
  ['B', 3, '160,75 230,75 240,130 180,110'],
  ['B', 6, '110,410 190,340 190,460 110,500'],
  ['B', 6, '120,560 180,540 180,570 130,610'],
  ['B', 6, '910,160 960,170 1010,200 990,290 1060,300 1100,340 1010,370 930,350 920,240'],
  ['B', 3, '930,60 1000,60 1060,120 1050,220 980,220 930,130'],
  ['B', 8, '1050,115 1090,80 1140,85 1110,120 1140,160 1120,170 1090,130 1020,165 1000,145'],
  ['B', 6, '1070,48 1260,45 1265,80 1200,95 1170,70 1100,70'],
  ['B', 9, '1210,160 1250,140 1255,190 1220,235 1190,210'],
  ['B', 4, '1130,200 1200,190 1190,260 1120,260'],
  ['B', 5, '1100,260 1190,250 1270,290 1270,330 1150,310'],
  ['B', 6, '1130,310 1240,310 1260,360 1220,410 1150,440 1080,450'],
  ['B', 3, '1190,400 1280,400 1285,500 1200,480'],
  ['B', 8, '1180,570 1290,570 1290,660 1250,720 1170,690'],
  ['B', 2, '1160,700 1280,670 1285,860 1150,780'],
  ['B', 5, '860,680 1030,640 1080,590 1060,670 960,700 880,730 780,780 640,740 700,720'],
  ['B', 1.700, '820,740 1100,650 1170,700 1280,760 1285,880 1100,860 900,880 830,820'],
  ['B', 7, '765,760 830,720 820,760 770,800 740,840 740,800'],
  ['B', 4, '620,770 770,780 880,820 870,850 740,850 660,900 640,840'],
  ['B', 3.600, '370,810 620,800 650,850 580,870 480,850 380,850'],
  ['B', 2.600, '355,870 480,850 600,860 590,990 400,990 420,930'],
  ['B', 8, '650,880 740,860 750,930 680,930 640,920'],
  ['B', 1.800, '380,900 640,900 640,990 400,985'],
  ['B', 2.400, '740,880 900,870 1050,900 1040,990 780,990 760,960'],
  ['B', 7, '800,950 870,950 940,940 990,980 990,990 810,990'],
  ['B', 7, '1050,890 1150,900 1230,930 1280,950 1280,990 1180,970 1060,930'],
  ['B', 4, '1180,780 1270,770 1270,830 1200,950 1190,880'],
  ['C', 9, '325,0 375,0 370,50 420,90 480,110 540,95 500,150 450,140 380,110 335,50'],
  ['C', 4, '480,15 580,0 590,30 540,80 530,30'],
  ['C', 5, '600,0 700,0 710,50 620,60 600,50'],
  ['C', 4, '420,60 470,60 480,100 430,100'],
  ['C', 4, '435,160 500,130 495,180 445,180'],
  ['C', 4, '455,210 505,205 500,240 455,240'],
  ['C', 5, '60,295 105,285 140,310 120,345 70,350'],
  ['C', 2.500, '140,360 220,370 250,410 180,400'],
  ['C', 9, '120,405 160,410 230,460 240,485 200,465 140,430'],
  ['C', 6.500, '225,395 290,430 330,450 320,465 260,450'],
  ['C', 6, '65,420 105,400 95,470 65,475'],
  ['C', 3, '260,340 350,365 330,385 275,360'],
  ['C', 2, '70,480 160,440 170,490 100,500'],
  ['C', 3, '235,470 300,480 290,500 250,500'],
  ['C', 4, '480,400 500,400 495,435 480,435'],
  ['C', 5, '520,400 580,375 560,430 525,430'],
  ['C', 2, '90,520 230,530 240,610 140,560 95,590'],
  ['C', 8, '120,580 200,570 210,600 170,620 140,600'],
  ['C', 3, '150,620 360,610 370,690 300,670 150,650'],
  ['C', 11, '48,620 90,630 130,680 210,680 220,720 160,740 165,800 90,780 75,730 50,700'],
  ['C', 4, '220,680 320,690 340,740 240,730'],
  ['C', 8, '250,790 300,750 350,740 380,800 340,830 260,815'],
  ['C', 2.500, '170,740 240,750 240,810 200,850 170,800'],
  ['C', 9, '42,770 60,800 95,810 90,850 75,900 95,950 40,950 35,880'],
  ['C', 4, '60,890 200,880 200,950 100,950'],
  ['C', 8, '120,880 190,890 200,945 130,940'],
  ['C', 4, '280,890 350,840 350,880 320,930 280,960'],
  ['C', 14, '320,890 400,870 480,835 575,805 640,830 660,970 560,972 420,965 300,950'],
  ['C', 6, '640,830 690,870 700,920 660,900 660,950'],
  ['C', 3, '680,950 750,930 760,970 700,975'],
  ['C', 3.500, '755,805 860,800 830,835 760,820'],
  ['C', 3, '775,855 900,840 890,910 780,870'],
  ['C', 9, '830,930 940,915 940,970 860,978'],
  ['C', 2, '770,900 850,900 840,960 770,940'],
  ['D', 10, '125,300 155,295 190,310 190,390 170,385 125,350'],
  ['D', 5, '125,255 185,275 185,300 130,280'],
  ['D', 7, '100,590 160,650 200,720 200,775 160,720 110,620'],
  ['D', 5.500, '160,640 250,600 315,655 270,760 215,750 220,690'],
  ['D', 15, '200,835 280,815 280,775 340,780 360,850 360,930 385,940 350,983 200,985 190,960 215,930'],
  ['D', 8, '445,905 500,905 500,945 450,930'],
  ['D', 3, '340,745 390,790 390,820 340,800'],
  ['D', 1.500, '370,0 640,0 640,60 540,60 500,160 370,150 410,80'],
  ['D', 4, '330,240 370,230 420,290 390,290'],
  ['D', 3, '460,110 510,140 490,170 440,165'],
  ['D', 3, '650,0 1000,0 960,150 800,130 660,160 690,60'],
  ['D', 5, '690,30 730,60 770,130 730,130 690,70'],
  ['D', 7.500, '800,0 940,0 1000,60 1090,70 1130,150 1180,170 1170,250 1110,270 1060,200 1000,110 900,60 820,40'],
  ['D', 8.500, '1150,0 1290,10 1310,110 1315,270 1260,260 1250,100 1140,60'],
  ['D', 4, '990,0 1260,0 1270,220 1180,280 1100,240 980,140'],
  ['D', 2.600, '660,150 960,120 1050,200 1000,240 880,230 800,220 680,190'],
  ['D', 3, '780,220 900,260 880,300 840,280 780,280'],
  ['D', 7.500, '900,250 960,250 980,310 1060,320 1190,400 1200,470 1130,500 1020,500 1010,380 930,300'],
  ['D', 4.500, '960,260 1280,260 1310,330 1230,390 1210,470 1100,510 950,470 960,350'],
  ['D', 3.500, '1170,350 1290,350 1310,430 1230,460 1180,440'],
  ['D', 3.500, '850,470 960,440 1060,510 930,530'],
  ['D', 2.400, '780,380 950,400 950,450 800,460'],
  ['D', 2, '830,290 990,280 970,380 860,370'],
  ['D', 2.500, '640,240 740,280 730,360 700,290'],
  ['D', 3, '620,350 730,330 730,360 640,370'],
  ['D', 5, '1050,510 1180,510 1190,600 1130,560 1050,570'],
  ['D', 1.700, '1190,490 1320,490 1315,620 1200,580'],
  ['D', 1.900, '1030,610 1180,600 1320,680 1310,720 1180,690 1070,660'],
  ['D', .900, '840,640 1060,690 1100,760 900,780 850,720'],
  ['D', .700, '860,780 1130,760 1100,900 900,900'],
  ['D', 2.300, '940,690 1090,670 1060,710 1000,710'],
  ['D', 12, '1150,760 1200,745 1325,790 1330,965 1250,965 1180,860 1140,810'],
  ['D', 5, '1180,700 1320,700 1330,800 1200,760'],
  ['D', 4, '1090,920 1200,880 1250,970 1090,972'],
  ['D', 1, '640,540 880,560 890,600 720,610'],
];

const placed = [];
for (const [sheet, density, outline] of fields) {
  const poly = toPoints(sheet, outline);
  const xs = poly.map(p => p[0]), ys = poly.map(p => p[1]);
  const x0 = Math.min(...xs), x1 = Math.max(...xs), y0 = Math.min(...ys), y1 = Math.max(...ys);
  const tries = Math.round((x1 - x0) * (y1 - y0) / 100 * density * (density < 10 ? .9 : 1));
  const spread = density >= 10 ? 5 : (sheet === 'B' || sheet === 'D') ? 12 : 6;
  for (let i = 0; i < tries; i++) {
    const x = x0 + rnd() * (x1 - x0), y = y0 + rnd() * (y1 - y0);
    if (!inside(x, y, poly)) continue;
    const px = x + (rnd() + rnd() - 1) * spread, py = y + (rnd() + rnd() - 1) * spread;
    if (!inside(px, py, state) || gaps.some(g => inside(px, py, g))) continue;
    placed.push([px, py]);
  }
}

// Rows of wells that follow a valley or the state line
const trails = [
  ['A', 8, '375,285 410,320 435,380 470,410 480,435'], ['A', 12, '250,185 245,160 320,145'], ['A', 10, '290,225 350,245 390,275 350,310'],
  ['A', 12, '730,320 745,380'], ['A', 11, '1200,885 1225,920 1245,965 1290,985'], ['A', 11, '1196,102 1228,82'], ['A', 9, '885,570 898,555'],
  ['A', 13, '848,488 828,508 858,535'], ['A', 12, '1175,440 1190,490 1165,510'], ['A', 12, '450,630 510,650 555,690'],
  ['C', 12, '265,322 320,375 380,385 395,415'], ['C', 11, '405,210 435,220'], ['C', 12, '590,125 605,165 620,158'], ['C', 12, '1122,115 1140,155 1158,160'],
  ['C', 34, '547,250 553,290 560,355'], ['C', 8, '1035,678 1052,692'], ['C', 12, '960,678 985,680'], ['C', 12, '1035,622 1022,648'], ['C', 9, '1168,600 1184,600'],
  ['C', 12, '1270,662 1290,690'], ['D', 9, '95,580 125,630 150,680 185,740'], ['D', 12, '300,190 340,215 345,250 400,290'], ['D', 12, '595,170 660,215'],
  ['D', 14, '660,262 725,290'], ['D', 11, '400,105 422,72'], ['D', 9, '263,92 280,78'], ['D', 9, '535,298 543,286'], ['D', 10, '422,435 440,456'],
  ['D', 12, '540,715 562,765'], ['D', 9, '550,745 568,750'], ['D', 12, '568,655 572,680 592,668'], ['D', 10, '178,405 190,420'],
  ['D', 9, '845,688 862,676'], ['D', 14, '865,748 888,745 898,720'], ['D', 14, '975,820 990,808 960,850 985,860'], ['D', 9, '405,945 418,975'],
  ['D', 14, '340,90 348,128'], ['D', 11, '415,915 440,892'], ['D', 8, '1300,110 1312,270'], ['D', 8, '1322,790 1329,965'], ['B', 8, '1283,500 1288,650'],
  ['B', 8, '260,62 500,60'], ['B', 8, '590,60 885,51'], ['A', 8, '64,490 60,600 55,800'], ['C', 9, '44,800 40,940'], ['C', 10, '42,942 190,950'], ['C', 8, '310,958 640,970'],
  ['D', 8, '195,982 340,985'], ['D', 12, '1200,968 1325,965'],
];
for (const [sheet, gap, text] of trails) {
  const line = toPoints(sheet, text);
  for (let i = 1; i < line.length; i++) {
    const [ax, ay] = line[i - 1], [bx, by] = line[i];
    const n = Math.max(1, Math.round(Math.hypot(bx - ax, by - ay) * 3 / gap));
    for (let k = 0; k <= n; k++) placed.push([ax + (bx - ax) * k / n + rnd() * 2.600 - 1.300, ay + (by - ay) * k / n + rnd() * 2.600 - 1.300]);
  }
}

// Paint order mixes the fields so that no outline reads as an edge
for (let i = placed.length - 1; i > 0; i--) {
  const j = Math.floor(rnd() * (i + 1));
  [placed[i], placed[j]] = [placed[j], placed[i]];
}

const singles = {
  A: `98,270 215,128 222,90 80,332 258,302 258,308 480,285 360,125 425,120 430,133 405,218 705,110 705,118 722,172 780,148 838,350 850,352 855,418
    720,445 698,486 610,508 565,545 545,520 813,548 837,568 855,618 850,622 924,648 876,689 815,755 705,773 743,798 738,803 837,880 462,618 470,645
    1181,258 1102,352 1112,368 1175,378 1192,382 1182,380 1127,402 1146,394 1100,420 1120,448 1126,446 1103,470 1044,494 1018,455 1178,458 1202,492 1180,508 1178,548
    1203,857 1218,822 1233,831 1235,912 985,95 1000,98 1003,105 978,113 1028,130 998,133 1060,222 1052,190 232,945 232,957 380,975 87,873 830,440 830,460 808,372 815,398 780,462`,
  B: `77,494 158,621 158,642 225,632 228,590 281,662 272,633 290,635 186,719 177,750 264,750 277,752 210,669 192,675 185,668 155,703 158,700
    207,836 249,833 224,866 233,895 234,901 291,855 312,854 318,893 291,915 257,930 342,939 356,940 245,965 243,974 278,977 8,966 250,590 265,598
    357,857 370,820 350,800 150,330 132,369 157,88 955,755 957,990 1128,744 1122,776 1092,770 930,795 1265,415`,
  C: `197,263 188,299 410,14 423,45 561,98 561,134 643,85 651,97 723,123 825,157 825,162 884,152 746,219 847,212 855,225 585,224 575,332 580,384
    995,312 1052,464 1064,548 1206,68 1130,177 1128,605 1206,596 1245,614 1200,638 1233,686 1307,662 987,626 1116,752 1013,848 907,788 909,793
    432,488 296,518 257,566 174,524 222,536 312,570 318,580 340,584 353,618 362,657 351,374 351,472 321,419 447,418 456,410 486,434 555,447
    744,920 737,946 790,910 951,966 1257,947 1222,942 1278,538 1280,544 1316,564 1323,564 69,593 89,516 90,240 98,240 75,376 1270,10 1283,5 1298,20 1311,40 1323,25 1326,57
    215,758 234,773 283,940 253,955 982,962 988,972 95,955 117,872`,
  D: `66,762 63,881 57,911 57,965 188,914 93,548 93,578 171,575 127,228 136,265 138,280 236,248 249,244 257,270 233,296 249,332 252,350 218,332
    306,302 348,294 351,320 366,342 432,258 432,356 424,297 441,312 447,293 318,385 316,392 390,386 308,426 324,420 351,468 411,489 225,405 213,429
    237,489 282,542 326,537 336,534 263,91 266,128 293,143 279,17 286,38 245,12 380,48 372,116 380,161 363,185 373,186 383,194 427,193 467,209
    537,188 570,212 525,248 558,251 615,218 525,339 510,375 504,416 597,399 578,425 624,435 525,452 579,474 582,485 588,515 518,497 513,537 518,541
    597,564 639,551 660,551 687,500 720,516 717,443 762,443 765,458 711,395 755,398 762,356 765,540 777,533 755,540 783,558 723,573 717,606 711,610
    674,611 675,614 654,627 636,665 690,702 699,732 720,738 699,756 765,756 804,750 840,603 828,567 843,537 870,600 444,581 438,614 450,620 408,620
    363,596 372,632 348,657 318,689 353,690 360,698 366,704 417,728 465,695 465,726 489,669 351,753 366,776 495,818 384,846 414,852 390,810 387,812
    540,896 558,887 567,893 555,920 516,957 573,957 632,954 636,962 648,890 711,858 702,957 801,860 840,854 849,789 897,789 888,833 873,853 885,866
    876,893 897,884 852,911 870,927 855,954 954,957 958,957 930,876 942,884 975,884 1002,873 1005,896 1017,933 1017,950 1041,938 1071,966 1083,825
    591,87 534,121 642,110 632,60 785,380 800,395 793,422 825,512 867,515 879,605 894,567 906,567 921,570 1041,738 1077,765 1014,779 1065,796 1053,805 1056,850`,
};
for (const [sheet, text] of Object.entries(singles)) placed.push(...toPoints(sheet, text));
placed.forEach(([x, y]) => well(x, y));

// County line through the valley grant
ctx.fillStyle = '#6e7a6e';
ctx.fillRect(1122, 786, 1, 62);
```
